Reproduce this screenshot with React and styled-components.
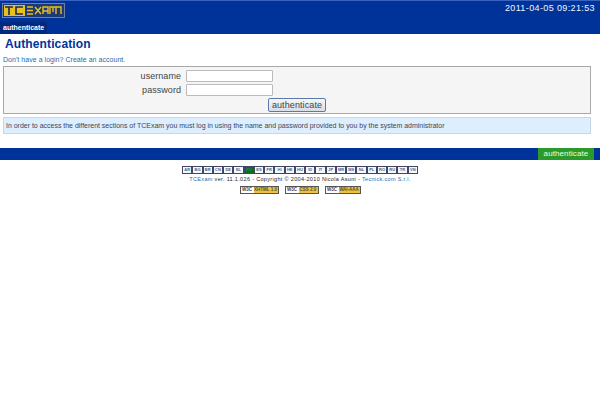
import React from 'react';
import styled, { createGlobalStyle } from 'styled-components';

const Global = createGlobalStyle`
  html, body { margin: 0; padding: 0; background: #fff; }
  body { font-family: "Liberation Sans", Arial, sans-serif; font-size: 8px; color: #333; }
`;
const Page = styled.div`width: 600px; height: 400px; overflow: hidden; display: flex; flex-direction: column;`;
const Header = styled.header`
  height: 34px; box-sizing: border-box; background: #003399; border-top: 1px solid #3a62c0;
  display: flex; flex-direction: column; justify-content: space-between;
`;
const HeaderTop = styled.div`display: flex; justify-content: space-between; align-items: flex-start; padding: 1px 5px 0 2px;`;
const Clock = styled.div`color: #f2f5ff; font-size: 9px; letter-spacing: .38px; line-height: 12px;`;
const Logo = styled.svg`display: block; margin-top: 1px;`;
const Tab = styled.div`
  width: 47px; height: 12px; background: #00297f; color: #fff; font-size: 7px; font-weight: bold;
  line-height: 11px; padding-left: 3px; box-sizing: border-box;
`;
const Title = styled.h1`
  margin: 4px 0 0 5px; font-size: 12px; line-height: 13px; letter-spacing: .12px; color: #003399; font-weight: bold;
`;
const SignUp = styled.a`
  margin: 4px 0 0 3px; font-size: 7px; line-height: 9px; color: #2a68ac; letter-spacing: .04px;
`;
const FormBox = styled.div`
  margin: 2px 9px 0 3px; height: 48px; box-sizing: border-box; background: #f5f5f5; border: 1px solid #a8a8a8;
  display: flex; flex-direction: column; padding-top: 2px;
`;
const Row = styled.div`display: flex; align-items: center; height: 14px;`;
const Label = styled.label`
  width: 177px; text-align: right; font-size: 9px; color: #444; box-sizing: border-box; letter-spacing: .05px;
`;
const Field = styled.div`
  margin-left: 5px; width: 87px; height: 12px; box-sizing: border-box; background: #fff; border: 1px solid #bbb; border-radius: 1px;
`;
const ButtonRow = styled.div`display: flex; padding: 1px 0 0 264px;`;
const Submit = styled.button`
  width: 58px; height: 14px; padding: 0; box-sizing: border-box; background: linear-gradient(#f4f6fa, #d8dee8);
  border: 1px solid #5a7aaa; border-radius: 2px; font-family: inherit; font-size: 9px; color: #444; line-height: 12px; letter-spacing: .1px;
`;
const Info = styled.div`
  margin: 3px 9px 0 3px; height: 17px; box-sizing: border-box; background: #ddeeff; border: 1px solid #c4d8ea;
  font-size: 7px; line-height: 15px; color: #445; padding-left: 2px; letter-spacing: -.015px;
`;
const BottomBar = styled.div`
  margin-top: 14px; height: 12px; background: #003399; display: flex; justify-content: flex-end; padding-right: 6px;
`;
const GreenBtn = styled.div`
  width: 56px; background: #2a9a2a; color: #e8ffe8; font-size: 8px; line-height: 12px; text-align: center; letter-spacing: .1px;
`;
const Langs = styled.div`display: flex; justify-content: center; margin-top: 6px; height: 8px;`;
const Lang = styled.span`
  width: 10.26px; height: 8px; box-sizing: border-box; border: 1px solid #446; background: ${p => p.$active ? '#007700' : '#f4f8ff'};
  color: #468; font-size: 4px; font-weight: bold; line-height: 6px; text-align: center;
`;
const Copy = styled.div`
  margin-top: 1px; text-align: center; font-size: 5.5px; line-height: 9px; color: #223; font-weight: normal; letter-spacing: .33px;
`;
const Blue = styled.span`color: #2a68ac;`;
const Badges = styled.div`display: flex; justify-content: center; gap: 6px; margin-top: 2px; height: 8px;`;
const Badge = styled.span`
  display: flex; width: ${p => p.$w}px; height: 8px; box-sizing: border-box; border: 1px solid #555; background: #fff;
  font-size: 4.5px; line-height: 6px; font-weight: bold; color: #445;
`;
const BadgeLeft = styled.span`width: 13px; text-align: center;`;
const BadgeRight = styled.span`flex: 1; background: #f0c040; text-align: center; color: #553;`;

const langs = ['AR','BG','BR','CN','DE','EL','EN','ES','FR','HI','HE','HU','ID','IT','JP','MR','MS','NL','PL','RO','RU','TR','VN'];

export default function App() {
  return (
    <Page>
      <Global />
      <Header>
        <HeaderTop>
          <Logo width="63" height="15" viewBox="0 0 63 15">
            <rect x="0.5" y="0.5" width="62" height="14" fill="#1e3a70" stroke="#6f7f9f" />
            <rect x="2" y="2" width="21" height="11" fill="#e8c020" />
            <g fill="none" stroke="#1a2a50" strokeWidth="1.6">
              <path d="M3 4h8M7 4v8M21 4h-7v7h7" />
            </g>
            <g fill="none" stroke="#e8c020" strokeWidth="1.4">
              <path d="M25 4h6M25 7.5h6M25 11h6M33 4l6 7M39 4l-6 7M41 11V4h5v7M41 8h5M48 11V4h6v7M51 4v5M54 4h5v7" />
            </g>
          </Logo>
          <Clock>2011-04-05 09:21:53</Clock>
        </HeaderTop>
        <Tab>authenticate</Tab>
      </Header>
      <Title>Authentication</Title>
      <SignUp>Don't have a login? Create an account.</SignUp>
      <FormBox>
        <Row><Label>username</Label><Field /></Row>
        <Row><Label>password</Label><Field /></Row>
        <ButtonRow><Submit>authenticate</Submit></ButtonRow>
      </FormBox>
      <Info>In order to access the different sections of TCExam you must log in using the name and password provided to you by the system administrator</Info>
      <BottomBar><GreenBtn>authenticate</GreenBtn></BottomBar>
      <Langs>{langs.map(l => <Lang key={l} $active={l === 'EN'}>{l}</Lang>)}</Langs>
      <Copy><Blue>TCExam</Blue> ver. 11.1.026 - Copyright © 2004-2010 Nicola Asuni - <Blue>Tecnick.com S.r.l.</Blue></Copy>
      <Badges>
        <Badge $w={39}><BadgeLeft>W3C</BadgeLeft><BadgeRight>XHTML 1.0</BadgeRight></Badge>
        <Badge $w={34}><BadgeLeft>W3C</BadgeLeft><BadgeRight>CSS 2.0</BadgeRight></Badge>
        <Badge $w={36}><BadgeLeft>W3C</BadgeLeft><BadgeRight>WAI-AAA</BadgeRight></Badge>
      </Badges>
    </Page>
  );
}
